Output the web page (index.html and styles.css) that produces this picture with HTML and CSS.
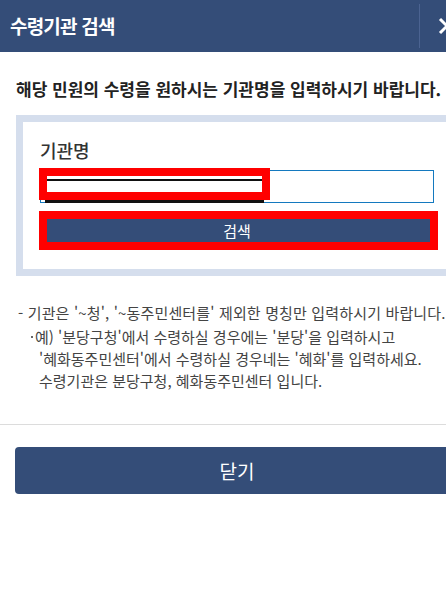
FILE: index.html
```html
<!DOCTYPE html>
<html lang="ko">
<head>
  <meta charset="UTF-8">
  <meta name="viewport" content="width=device-width, initial-scale=1.0">
  <title>수령기관 검색</title>
  <link rel="stylesheet" href="styles.css">
</head>
<body>
  <div class="popup">
    <header class="popup-head">
      <h1>수령기관 검색</h1>
      <button class="btn-x" type="button" aria-label="닫기">
        <svg width="18" height="18" viewBox="0 0 18 18">
          <path d="M2 2 L16 16 M16 2 L2 16" stroke="#fff" stroke-width="3" fill="none"/>
        </svg>
      </button>
    </header>

    <div class="popup-body">
      <p class="lead">해당 민원의 수령을 원하시는 기관명을 입력하시기 바랍니다.</p>

      <div class="search-box">
        <label class="label" for="orgName">기관명</label>
        <input type="text" id="orgName" class="input">
        <button class="btn-search" type="button">검색</button>

        <!-- 가림 표시 -->
        <div class="mask mask-input"><span class="mask-line"></span></div>
        <span class="mask-under"></span>
        <div class="mask mask-btn"></div>
      </div>

      <div class="notes">
        <p class="note">- 기관은 '~청', '~동주민센터를' 제외한 명칭만 입력하시기 바랍니다.</p>
        <p class="note-sub">예) '분당구청'에서 수령하실 경우에는 '분당'을 입력하시고<br>'혜화동주민센터'에서 수령하실 경우네는 '혜화'를 입력하세요.<br>수령기관은 분당구청, 혜화동주민센터 입니다.</p>
      </div>
    </div>

    <div class="popup-foot">
      <button class="btn-close" type="button">닫기</button>
    </div>
  </div>
</body>
</html>
```

FILE: styles.css
```css
html {
  overflow: hidden;
}
body {
  margin: 0;
  font-family: "Noto Sans CJK KR", "Noto Sans", sans-serif;
  background-color: #fff;
  color: #333;
}
.popup {
  width: 474px;
}
.popup-head {
  display: flex;
  align-items: center;
  height: 52px;
  background-color: #344d78;
}
.popup-head h1 {
  flex: 1;
  margin: 0;
  padding-left: 10px;
  font-size: 19px;
  font-weight: 700;
  letter-spacing: -0.8px;
  line-height: 24px;
  color: #fff;
}
.btn-x {
  display: flex;
  align-items: center;
  justify-content: center;
  width: 55px;
  height: 44px;
  padding: 0;
  border: none;
  border-left: 1px solid #4b6391;
  background: none;
}
.popup-body {
  padding: 24px 16px 0;
}
.lead {
  margin: 0;
  font-size: 17px;
  font-weight: 700;
  line-height: 26px;
  color: #222;
  white-space: nowrap;
}
.search-box {
  position: relative;
  margin-top: 13px;
  padding: 16px 17px 19px;
  border: 7px solid #d5deed;
}
.label {
  display: block;
  font-size: 18px;
  font-weight: 500;
  line-height: 24px;
  color: #333;
}
.input {
  display: block;
  box-sizing: border-box;
  width: 100%;
  height: 33px;
  margin-top: 8px;
  border: 1px solid #1479bf;
  outline: none;
}
.btn-search {
  display: block;
  width: 100%;
  height: 39px;
  margin-top: 8px;
  border: none;
  background-color: #344d78;
  color: #fff;
  font-family: inherit;
  font-size: 15px;
}
.mask {
  position: absolute;
  box-sizing: border-box;
  border: 8px solid #f00;
}
.mask-input {
  left: 16px;
  top: 46px;
  width: 231px;
  height: 32px;
  background-color: #fff;
}
.mask-line {
  display: block;
  margin-top: 3px;
  height: 2px;
  background-color: #111;
}
.mask-under {
  position: absolute;
  left: 22px;
  top: 78px;
  width: 219px;
  height: 3px;
  background-color: #111;
}
.mask-btn {
  left: 16px;
  top: 89px;
  width: 399px;
  height: 39px;
}
.notes {
  margin-top: 26px;
  font-size: 15px;
  line-height: 22px;
  color: #444;
  white-space: nowrap;
}
.note {
  margin: 0 0 2px 2px;
  letter-spacing: 0.15px;
}
.note-sub {
  position: relative;
  margin: 0;
  padding-left: 23px;
  text-indent: -4px;
}
.note-sub::before {
  content: "";
  position: absolute;
  left: 15px;
  top: 10px;
  width: 2px;
  height: 2px;
  background-color: #666;
}
.popup-foot {
  margin-top: 32px;
  padding: 22px 15px;
  border-top: 1px solid #dcdcdc;
}
.btn-close {
  display: block;
  width: 100%;
  height: 47px;
  border: none;
  border-radius: 4px;
  background-color: #344d78;
  color: #fff;
  font-family: inherit;
  font-size: 19px;
}
```
